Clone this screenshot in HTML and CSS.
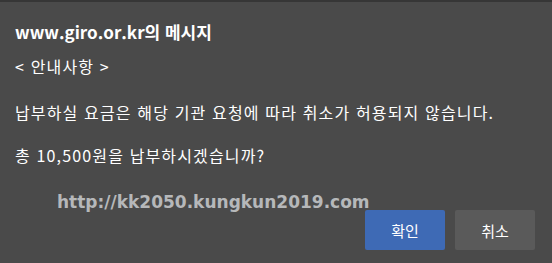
FILE: index.html
```html
<!DOCTYPE html>
<html lang="ko">
<head>
<meta charset="utf-8">
<link rel="stylesheet" href="styles.css">
</head>
<body>
<div class="dialog">
  <div class="title">www.giro.or.kr의 메시지</div>
  <p class="line l2">&lt; 안내사항 &gt;</p>
  <p class="line l3">납부하실 요금은 해당 기관 요청에 따라 취소가 허용되지 않습니다.</p>
  <p class="line l4">총 10,500원을 납부하시겠습니까?</p>
  <div class="buttons">
    <button class="btn ok">확인</button>
    <button class="btn cancel">취소</button>
  </div>
  <div class="watermark">http://kk2050.kungkun2019.com</div>
</div>
</body>
</html>
```
FILE: styles.css
```css
html, body {
  margin: 0;
  padding: 0;
  background: #4a4a4a;
}
.dialog {
  position: relative;
  height: 261px;
  border-top: 2px solid #363636;
  padding: 0 17px 0 15px;
  color: #ffffff;
  font-family: "Noto Sans CJK KR", "Noto Sans", sans-serif;
}
.title {
  margin-top: 20px;
  font-size: 17px;
  line-height: 20px;
  font-weight: 700;
}
.line {
  margin: 0;
  font-size: 16px;
  line-height: 24px;
  letter-spacing: 1.15px;
}
.l2 { margin-top: 12px; }
.l3 { margin-top: 22px; }
.l4 { margin-top: 19px; }
.buttons {
  display: flex;
  justify-content: flex-end;
  gap: 10px;
  margin-top: 43px;
}
.btn {
  width: 80px;
  height: 40px;
  border: none;
  border-radius: 2px;
  color: #ffffff;
  font-family: "Noto Sans CJK KR", sans-serif;
  font-size: 15px;
  padding: 0;
}
.ok { background: #3e6ab5; }
.cancel { background: #5a5a5a; }
.watermark {
  position: absolute;
  left: 57px;
  top: 190px;
  font-family: "DejaVu Sans", sans-serif;
  font-weight: 700;
  font-size: 17px;
  line-height: 20px;
  color: #b6b8ba;
}
```
